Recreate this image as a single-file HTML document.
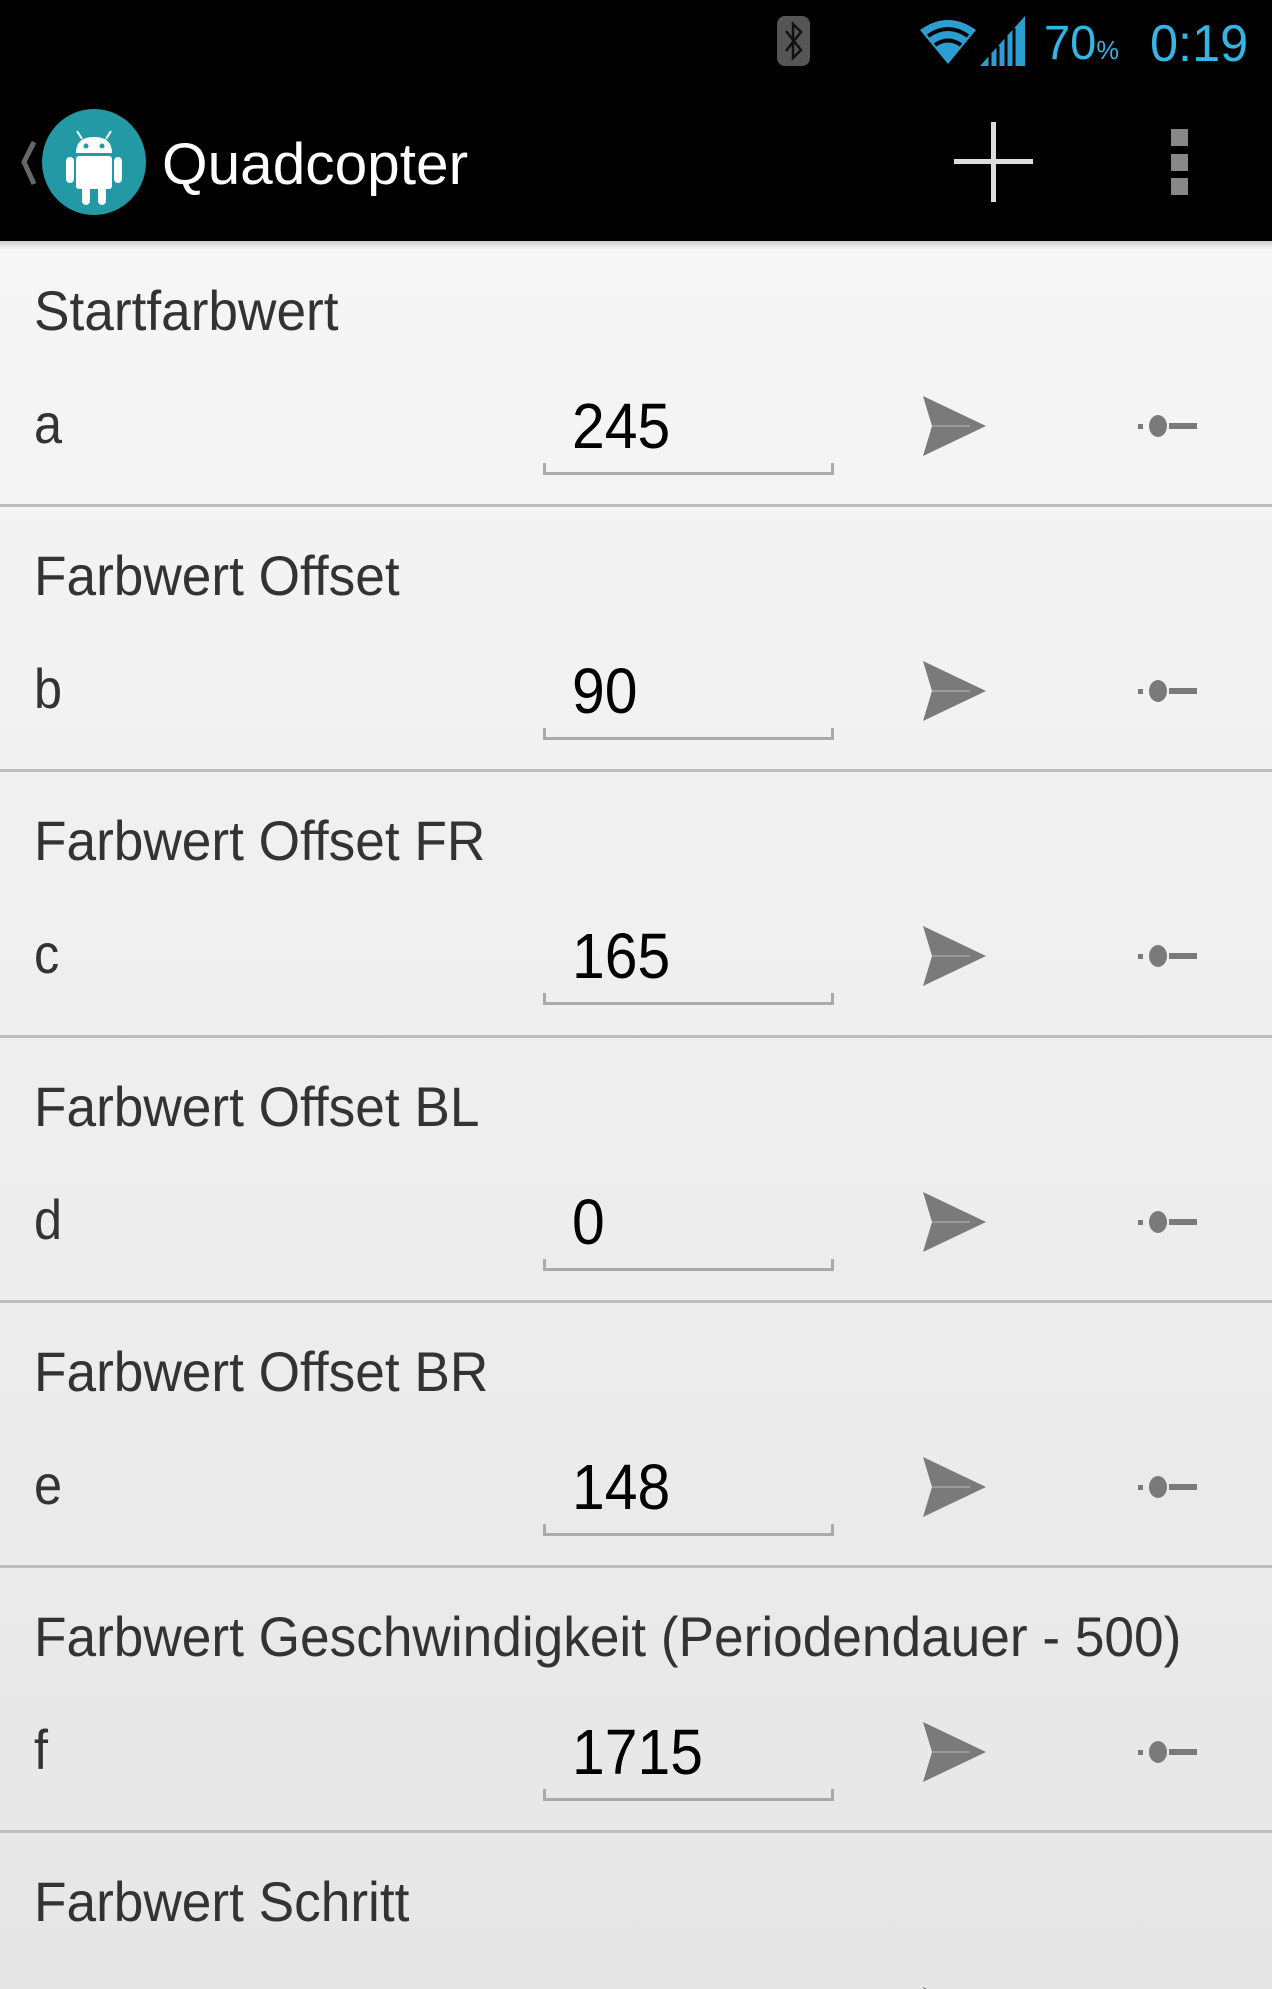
<!DOCTYPE html>
<html style="width:1272px;height:1989px;overflow:hidden"><head><meta charset="utf-8"><style>
*{margin:0;padding:0;box-sizing:border-box}
body{width:1272px;height:1989px;overflow:hidden;font-family:"Liberation Sans",sans-serif}
#wrap{position:relative;width:1272px;height:1989px;overflow:hidden;background:linear-gradient(#f8f8f8,#e6e6e6)}
.top{position:absolute;left:0;top:0;width:1272px;height:241px;background:#000}
.t{position:absolute;white-space:nowrap;transform-origin:left center;line-height:1}
.sep{position:absolute;left:0;width:1272px;height:3px;background:#bdbdbd}
.title{font-size:56px;color:#333;transform:scaleX(0.95)}
.let{font-size:56px;color:#333;transform:scaleX(0.9)}
.val{font-size:64px;color:#000;transform:scaleX(0.92)}
.ul{position:absolute;left:543px;width:291px;height:12px;border:3px solid #aaa;border-top:none}
</style></head><body><div id="wrap">
<div class="top"></div>
<div style="position:absolute;left:777px;top:16px;width:33px;height:50px;background:#555;border-radius:8px"></div>
<svg style="position:absolute;left:777px;top:16px" width="33" height="50"><path d="M9 15 L24 34 L16 42 L16 8 L24 16 L9 35" stroke="#111" stroke-width="2.5" fill="none"/></svg>
<svg style="position:absolute;left:918px;top:16px" width="110" height="52">
<path d="M2 14 Q30 -6 58 14 L30 48 Z" fill="#2b9fd2"/>
<path d="M10 20 Q30 6 50 20" stroke="#000" stroke-width="4" fill="none"/>
<path d="M17 29 Q30 20 43 29" stroke="#000" stroke-width="4" fill="none"/>
<path d="M62 50 L107 50 L107 0 Z" fill="#2b9fd2"/>
<path d="M72 50 L72 38 M80 50 L80 30 M88 50 L88 20 M96 50 L96 12" stroke="#000" stroke-width="3"/>
</svg>
<div class="t" style="left:1044px;top:20px;font-size:48px;color:#33b5e5;transform:scaleX(0.98)">70<span style="font-size:26px">%</span></div>
<div class="t" style="left:1150px;top:18px;font-size:52px;color:#33b5e5;transform:scaleX(0.97)">0:19</div>
<svg style="position:absolute;left:10px;top:138px" width="30" height="50"><path d="M24 4 L14 24 L24 46" stroke="#666" stroke-width="5" fill="none"/></svg>
<div style="position:absolute;left:42px;top:109px;width:104px;height:106px;border-radius:50%;background:#2399a5"></div>
<svg style="position:absolute;left:42px;top:109px" width="104" height="106">
<path d="M35 22 L40 30 M69 22 L64 30" stroke="#fff" stroke-width="2"/>
<path d="M34 44 Q34 28 52 28 Q70 28 70 44 Z" fill="#fff"/>
<circle cx="44" cy="37" r="2.5" fill="#2399a5"/><circle cx="60" cy="37" r="2.5" fill="#2399a5"/>
<rect x="34" y="47" width="36" height="33" rx="3" fill="#fff"/>
<rect x="24" y="48" width="8" height="26" rx="4" fill="#fff"/><rect x="72" y="48" width="8" height="26" rx="4" fill="#fff"/>
<rect x="40" y="76" width="8" height="20" rx="4" fill="#fff"/><rect x="56" y="76" width="8" height="20" rx="4" fill="#fff"/>
</svg>
<div class="t" style="left:162px;top:136px;font-size:58px;color:#fff;transform:scaleX(1.01)">Quadcopter</div>
<div style="position:absolute;left:954px;top:159px;width:79px;height:5px;background:#ddd"></div>
<div style="position:absolute;left:991px;top:122px;width:5px;height:80px;background:#ddd"></div>
<div style="position:absolute;left:1171px;top:129px;width:17px;height:17px;background:#888"></div>
<div style="position:absolute;left:1171px;top:154px;width:17px;height:17px;background:#888"></div>
<div style="position:absolute;left:1171px;top:178px;width:17px;height:17px;background:#888"></div>
<div style="position:absolute;left:0;top:241px;width:1272px;height:8px;background:linear-gradient(#ccc,rgba(0,0,0,0))"></div>
<div id="rows"></div>
</div>
<script>
(function(){
var d=[["Startfarbwert","a","245"],["Farbwert Offset","b","90"],["Farbwert Offset FR","c","165"],["Farbwert Offset BL","d","0"],["Farbwert Offset BR","e","148"],["Farbwert Geschwindigkeit (Periodendauer - 500)","f","1715"],["Farbwert Schritt","",""]];
var h="";
for(var i=0;i<d.length;i++){var y=Math.round(241+i*265.2);
if(i>0)h+='<div class="sep" style="top:'+(y-2)+'px"></div>';
h+='<div class="t title" style="left:34px;top:'+(y+42)+'px">'+d[i][0]+'</div>';
var c=y+185;
if(d[i][1]){
h+='<div class="t let" style="left:34px;top:'+(c-30)+'px">'+d[i][1]+'</div>';
h+='<div class="t val" style="left:572px;top:'+(c-32)+'px">'+d[i][2]+'</div>';
h+='<div class="ul" style="top:'+(c+37)+'px"></div>';
h+='<svg style="position:absolute;left:920px;top:'+(c-32)+'px" width="70" height="64"><path d="M3 2 L66 32 L3 62 L12 32 Z" fill="#7a7a7a"/><path d="M12 32 L50 32" stroke="#9a9a9a" stroke-width="2"/></svg>';
h+='<svg style="position:absolute;left:1136px;top:'+(c-14)+'px" width="64" height="28"><rect x="2" y="12" width="5" height="5" fill="#7a7a7a"/><ellipse cx="22" cy="14" rx="9" ry="11" fill="#7a7a7a"/><rect x="33" y="11" width="28" height="6" fill="#7a7a7a"/></svg>';
} else {
h+='<svg style="position:absolute;left:920px;top:'+(c-32)+'px" width="70" height="64"><path d="M3 2 L66 32 L3 62 L12 32 Z" fill="#7a7a7a"/></svg>';
}}
document.getElementById("rows").innerHTML=h;
})();
</script>
</body></html>
